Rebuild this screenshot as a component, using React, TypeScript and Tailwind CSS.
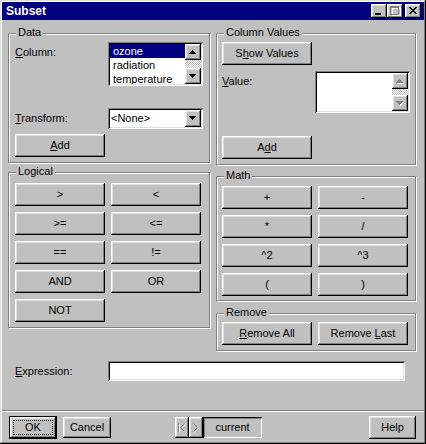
import React from "react";

type P = { children?: React.ReactNode; className?: string };

function Btn({ children, className = "" }: P) {
  return (
    <div
      className={
        "relative flex shrink-0 items-center justify-center bg-[#c0c0c0] text-black shadow-[inset_-1px_-1px_#000,inset_1px_1px_#fff,inset_-2px_-2px_#808080,inset_2px_2px_#dfdfdf] " +
        className
      }
    >
      {children}
    </div>
  );
}

function Group({ label, children, className = "" }: P & { label: string }) {
  return (
    <div
      className={
        "relative shrink-0 border border-[#808080] shadow-[inset_1px_1px_#fff,1px_1px_#fff] " +
        className
      }
    >
      <span className="absolute left-[7px] top-[-8px] bg-[#c0c0c0] px-[2px] leading-[13px]">
        {label}
      </span>
      {children}
    </div>
  );
}

function Up({ disabled = false }: { disabled?: boolean }) {
  const d = "M3 0h1v1h1v1h1v1h1v1H0V3h1V2h1V1h1z";
  return (
    <svg width="8" height="5" viewBox="0 0 8 5">
      {disabled && <path d={d} fill="#fff" transform="translate(1,1)" />}
      <path d={d} fill={disabled ? "#808080" : "#000"} />
    </svg>
  );
}

function Down({ disabled = false }: { disabled?: boolean }) {
  const d = "M0 0h7v1H6v1H5v1H4v1H3V3H2V2H1V1H0z";
  return (
    <svg width="8" height="5" viewBox="0 0 8 5">
      {disabled && <path d={d} fill="#fff" transform="translate(1,1)" />}
      <path d={d} fill={disabled ? "#808080" : "#000"} />
    </svg>
  );
}

function ScrollBar({ disabled = false }: { disabled?: boolean }) {
  return (
    <div className="flex w-[16px] shrink-0 flex-col">
      <Btn className="h-[16px] w-[16px]">
        <Up disabled={disabled} />
      </Btn>
      <div className="flex-1 bg-[image:repeating-conic-gradient(#c0c0c0_0%_25%,#ffffff_0%_50%)] bg-[length:2px_2px]" />
      <Btn className="h-[16px] w-[16px]">
        <Down disabled={disabled} />
      </Btn>
    </div>
  );
}

const sunken =
  "shadow-[inset_1px_1px_#808080,inset_-1px_-1px_#fff,inset_2px_2px_#000,inset_-2px_-2px_#dfdfdf]";

function U({ children }: P) {
  return <span className="underline underline-offset-[1px]">{children}</span>;
}

export default function App() {
  return (
    <div className="flex h-[444px] w-[426px] flex-col overflow-hidden bg-[#c0c0c0] p-[2px] font-['Liberation_Sans',Arial,sans-serif] text-[11px] leading-[13px] text-black shadow-[inset_-1px_-1px_#000,inset_1px_1px_#dfdfdf,inset_-2px_-2px_#808080,inset_2px_2px_#fff]">
      {/* Title bar */}
      <div className="flex h-[18px] shrink-0 items-center bg-[#000080] pl-[4px] pr-[3px]">
        <span className="text-[12px] font-bold leading-[14px] text-white">Subset</span>
        <div className="ml-auto flex items-center">
          <Btn className="h-[14px] w-[16px]">
            <svg width="16" height="14" viewBox="0 0 16 14">
              <rect x="4" y="9" width="6" height="2" fill="#000" />
            </svg>
          </Btn>
          <Btn className="h-[14px] w-[16px]">
            <svg width="16" height="14" viewBox="0 0 16 14">
              <path d="M4 2h9v9H4zM5 4v6h7V4z" fill="#fff" transform="translate(1,1)" />
              <path d="M3 2h9v9H3zM4 4v6h7V4z" fill="#808080" fillRule="evenodd" />
            </svg>
          </Btn>
          <Btn className="ml-[2px] h-[14px] w-[16px]">
            <svg width="16" height="14" viewBox="0 0 16 14">
              <path
                transform="translate(4,3)"
                d="M0 0h2v1H0zM6 0h2v1H6zM1 1h2v1H1zM5 1h2v1H5zM2 2h4v1H2zM3 3h2v1H3zM2 4h4v1H2zM1 5h2v1H1zM5 5h2v1H5zM0 6h2v1H0zM6 6h2v1H6z"
                fill="#000"
              />
            </svg>
          </Btn>
        </div>
      </div>

      {/* Main */}
      <div className="flex flex-col pl-[6px]">
        <div className="mt-[13px] flex items-start gap-[6px]">
          {/* Left column */}
          <div className="flex w-[202px] flex-col">
            <Group label="Data" className="h-[130px]">
              <div className="flex flex-col pl-[6px] pt-[8px]">
                <div className="flex h-[44px]">
                  <div className="w-[93px] shrink-0 pt-[4px]">
                    <U>C</U>olumn:
                  </div>
                  <div className={"flex h-[44px] w-[95px] bg-white p-[2px] " + sunken}>
                    <div className="flex flex-1 flex-col overflow-hidden">
                      <div className="h-[14px] shrink-0 bg-[#000080] pl-[3px] leading-[14px] text-white">
                        ozone
                      </div>
                      <div className="h-[14px] shrink-0 pl-[3px] leading-[14px]">radiation</div>
                      <div className="h-[14px] shrink-0 pl-[3px] leading-[14px]">temperature</div>
                    </div>
                    <ScrollBar />
                  </div>
                </div>
                <div className="mt-[22px] flex h-[21px] items-center">
                  <div className="w-[93px] shrink-0">
                    <U>T</U>ransform:
                  </div>
                  <div className={"flex h-[21px] w-[95px] items-center bg-white p-[2px] " + sunken}>
                    <div className="flex-1 pl-[1px]">&lt;None&gt;</div>
                    <Btn className="h-[17px] w-[16px]">
                      <Down />
                    </Btn>
                  </div>
                </div>
                <Btn className="mt-[5px] h-[23px] w-[90px]">
                  <span>
                    <U>A</U>dd
                  </span>
                </Btn>
              </div>
            </Group>

            <Group label="Logical" className="mt-[9px] h-[156px]">
              <div className="grid grid-cols-[90px_90px] gap-[6px] pl-[6px] pt-[10px]">
                <Btn className="h-[23px]">&gt;</Btn>
                <Btn className="h-[23px]">&lt;</Btn>
                <Btn className="h-[23px]">&gt;=</Btn>
                <Btn className="h-[23px]">&lt;=</Btn>
                <Btn className="h-[23px]">==</Btn>
                <Btn className="h-[23px]">!=</Btn>
                <Btn className="h-[23px]">AND</Btn>
                <Btn className="h-[23px]">OR</Btn>
                <Btn className="h-[23px]">NOT</Btn>
              </div>
            </Group>
          </div>

          {/* Right column */}
          <div className="flex w-[200px] flex-col">
            <Group label="Column Values" className="h-[132px]">
              <div className="flex flex-col pl-[5px] pt-[8px]">
                <Btn className="h-[23px] w-[90px]">
                  <span>
                    S<U>h</U>ow Values
                  </span>
                </Btn>
                <div className="mt-[6px] flex">
                  <div className="w-[93px] shrink-0 pt-[4px]">
                    <U>V</U>alue:
                  </div>
                  <div className={"flex h-[42px] w-[95px] bg-white p-[2px] " + sunken}>
                    <div className="flex-1" />
                    <ScrollBar disabled />
                  </div>
                </div>
                <Btn className="mt-[23px] h-[23px] w-[90px]">
                  <span>
                    A<U>d</U>d
                  </span>
                </Btn>
              </div>
            </Group>

            <Group label="Math" className="mt-[11px] h-[125px]">
              <div className="grid grid-cols-[90px_90px] gap-[6px] pl-[5px] pt-[9px]">
                <Btn className="h-[23px]">+</Btn>
                <Btn className="h-[23px]">-</Btn>
                <Btn className="h-[23px]">*</Btn>
                <Btn className="h-[23px]">/</Btn>
                <Btn className="h-[23px]">^2</Btn>
                <Btn className="h-[23px]">^3</Btn>
                <Btn className="h-[23px]">(</Btn>
                <Btn className="h-[23px]">)</Btn>
              </div>
            </Group>

            <Group label="Remove" className="mt-[12px] h-[38px]">
              <div className="flex gap-[6px] pl-[5px] pt-[8px]">
                <Btn className="h-[23px] w-[90px]">
                  <span>
                    <U>R</U>emove All
                  </span>
                </Btn>
                <Btn className="h-[23px] w-[90px]">
                  <span>
                    Remove <U>L</U>ast
                  </span>
                </Btn>
              </div>
            </Group>
          </div>
        </div>

        {/* Expression */}
        <div className="mt-[10px] flex h-[20px] items-center pl-[7px]">
          <div className="w-[93px] shrink-0">
            <U>E</U>xpression:
          </div>
          <div className={"h-[20px] w-[297px] bg-white " + sunken} />
        </div>
      </div>

      {/* Separator */}
      <div className="mt-[29px] h-[2px] shrink-0 border-t border-b border-t-[#808080] border-b-white" />

      {/* Bottom row */}
      <div className="mt-[4px] flex items-start pl-[7px] pr-[8px]">
        <div className="h-[23px] w-[48px] shrink-0 border border-black">
          <Btn className="h-full w-full">
            <div className="absolute inset-[3px] border border-dotted border-black" />
            <span>OK</span>
          </Btn>
        </div>
        <Btn className="ml-[6px] mt-[1px] h-[21px] w-[48px]">Cancel</Btn>
        <div className="ml-[64px] mt-[1px] flex">
          <Btn className="h-[21px] w-[14px]">
            <svg width="8" height="9" viewBox="0 0 8 9">
              <g transform="translate(1,1)" stroke="#fff" fill="none">
                <path d="M0.5 0v9M6.5 0.5L2.5 4.5L6.5 8.5" />
              </g>
              <g stroke="#808080" fill="none">
                <path d="M0.5 0v9M6.5 0.5L2.5 4.5L6.5 8.5" />
              </g>
            </svg>
          </Btn>
          <Btn className="h-[21px] w-[14px]">
            <svg width="7" height="10" viewBox="0 0 7 10">
              <path d="M1.5 1.5L5.5 5.5L1.5 9.5" stroke="#fff" fill="none" />
              <path d="M0.5 0.5L4.5 4.5L0.5 8.5" stroke="#808080" fill="none" />
            </svg>
          </Btn>
          <div className="flex h-[21px] w-[59px] items-center justify-center bg-[#c0c0c0] shadow-[inset_1px_1px_#000,inset_-1px_-1px_#fff,inset_2px_2px_#808080]">
            current
          </div>
        </div>
        <Btn className="ml-auto h-[23px] w-[47px]">Help</Btn>
      </div>
    </div>
  );
}
